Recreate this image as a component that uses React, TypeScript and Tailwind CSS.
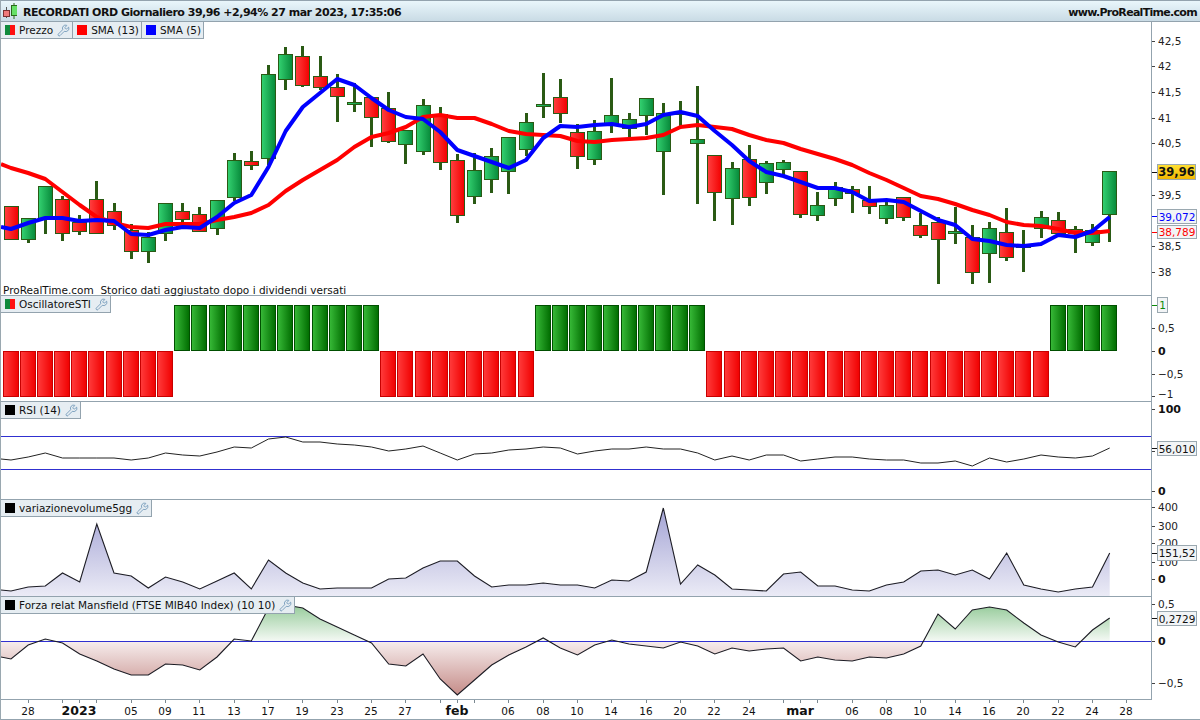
import React from "react";
import { Wrench } from "lucide-react";

const X = (i: number) => 11 + 17.1667 * i;
const cx = (i: number) => Math.floor(X(i)) + 0.5;

// [high, low, top, bottom, green?]
const C: [number, number, number, number, number][] = [
  [206,239,206,239,0],[218,243,218,239,1],[186,234,186,218,1],[196,241,199,233,0],[215,235,222,231,0],
  [181,233,199,233,0],[203,230,211,225,0],[224,259,230,251,0],[232,263,237,251,1],[203,241,203,233,1],
  [203,223,211,219,0],[207,231,214,231,0],[200,235,200,228,1],[153,201,160,197,1],[151,170,161,165,0],
  [65,165,74,158,1],[47,90,54,79,1],[46,87,56,85,0],[56,90,76,87,0],[74,122,87,96,0],
  [83,112,102,104,1],[97,147,97,117,0],[92,143,108,141,0],[130,164,130,144,1],[99,155,105,151,1],
  [107,170,114,162,0],[154,223,160,215,0],[153,204,170,196,1],[148,193,156,179,1],[137,194,137,171,1],
  [113,156,122,149,1],[73,118,104,106,1],[79,123,97,113,0],[124,169,132,156,0],[120,165,131,159,1],
  [78,133,115,125,1],[113,137,119,128,1],[98,135,98,115,1],[103,195,113,151,1],[101,126,112,114,1],
  [86,204,139,143,1],[155,221,155,192,0],[162,225,168,198,1],[145,206,159,197,0],[161,194,163,182,1],
  [160,176,162,169,1],[171,218,171,214,0],[192,221,205,215,1],[182,206,187,198,1],[186,213,189,193,0],
  [186,214,200,206,0],[202,224,205,218,1],[197,221,197,217,0],[213,238,225,235,0],[217,284,222,239,0],
  [207,244,231,233,1],[225,284,237,272,0],[222,283,228,253,1],[208,261,232,257,0],[230,272,245,247,1],
  [211,238,217,228,1],[212,236,220,233,0],[226,253,229,233,0],[224,246,230,242,1],[171,242,171,214,1],
];

const SMA13 = [168,173,179,192,205,217,223,227,228,224,224,224,220,217,213,205,191,180,170,160,147,137,133,127,117,115,118,118,124,131,134,135,136,141,142,140,139,138,135,127,125,127,129,135,140,143,149,154,159,165,173,180,188,196,199,204,210,215,222,225,226,229,233,233,231];
const SMA5 = [229,223,218,218,221,220,221,234,235,230,227,228,217,203,195,167,131,107,93,79,85,98,110,117,119,132,150,156,162,168,160,138,126,127,125,124,127,124,115,112,116,131,145,161,172,176,182,188,188,192,201,200,202,211,220,225,239,241,245,246,244,235,237,231,217];
const RSI = [460,457,453,458,458,458,458,460,458,453,455,456,452,447,448,439,437,442,442,444,445,447,451,449,446,453,460,454,453,450,449,447,448,454,451,449,449,447,449,449,453,460,456,460,455,455,461,459,457,457,459,460,460,463,463,461,466,458,462,459,455,457,458,456,448];
const VOL = [591,587,586,573,582,524,573,576,588,577,582,589,581,573,589,560,573,583,589,588,588,588,579,578,568,561,561,576,587,585,585,583,585,585,588,580,581,572,508,584,565,575,589,590,591,574,572,586,586,590,591,585,582,571,570,575,570,579,553,585,589,592,589,587,553];
const MANS = [659,645,639,643,654,661,669,675,675,664,665,670,657,639,641,608,605,608,619,627,635,643,664,666,654,679,695,680,665,655,647,638,648,655,645,640,644,646,648,642,646,654,648,651,649,648,661,657,660,661,657,658,654,646,614,629,610,607,610,623,635,642,647,630,618];

const line = (ys: number[], x0: number, y0: number) =>
  `${x0},${y0} ` + ys.map((y, i) => `${X(i).toFixed(1)},${y}`).join(" ");

const OSC = Array.from({ length: 65 }, (_, i) =>
  (i >= 10 && i <= 21) || (i >= 31 && i <= 40) || i >= 61 ? 1 : 0
);

type Tick = { y: number; t?: string; b?: boolean; ty?: number };
type Box = { y: number; h: number; w: number; t: string; c: string; bold?: boolean; gold?: boolean };

function Axis({ top, className, ticks, boxes }: { top: number; className: string; ticks: Tick[]; boxes?: Box[] }) {
  const h = parseInt(className.match(/h-\[(\d+)px\]/)?.[1] ?? "100");
  return (
    <svg viewBox={`1152 ${top} 48 ${h}`} className={className}>
      <defs>
        <linearGradient id={`gold${top}`} x1="0" y1="0" x2="0" y2="1">
          <stop offset="0" stopColor="#ffe033" />
          <stop offset="1" stopColor="#f2b600" />
        </linearGradient>
      </defs>
      {ticks.map((k) => (
        <g key={k.y}>
          <line x1="1152" x2="1155" y1={k.y + 0.5} y2={k.y + 0.5} stroke="#444" />
          {k.t && (
            <text
              x="1158"
              y={(k.ty ?? k.y) + 4}
              className={k.b ? "text-[11px] font-bold" : "text-[10.5px]"}
              fill={k.b ? "#111" : "#222"}
            >
              {k.t}
            </text>
          )}
        </g>
      ))}
      {boxes?.map((b) => (
        <g key={b.t}>
          <line x1="1152" x2="1157" y1={Math.round(b.y + b.h / 2) + 0.5} y2={Math.round(b.y + b.h / 2) + 0.5} stroke={b.gold ? "#111" : b.c} />
          <rect
            x="1157.5"
            y={b.y + 0.5}
            width={b.w}
            height={b.h}
            fill={b.gold ? `url(#gold${top})` : "#f2f4f6"}
            stroke="#9aa8b0"
          />
          <text
            x={1157.5 + b.w / 2}
            y={b.y + b.h / 2 + 4.5}
            textAnchor="middle"
            className={b.bold ? "text-[11.5px] font-bold" : "text-[10.5px]"}
            fill={b.c}
          >
            {b.t}
          </text>
        </g>
      ))}
    </svg>
  );
}

function Chip({ name, swatch, wrench = true }: { name: string; swatch: React.ReactNode; wrench?: boolean }) {
  return (
    <div
      className={
        wrench
          ? "flex items-center h-[17px] pl-1 pr-[2px] gap-1 bg-[#e6edf2] border-r border-b border-[#93a3ae] text-[10.5px] leading-none text-[#111] whitespace-nowrap"
          : "flex items-center h-[17px] pl-1 pr-[2px] gap-1 bg-[#e6edf2] border-r border-b border-[#93a3ae] text-[10.5px] leading-none text-[#111] whitespace-nowrap"
      }
    >
      {swatch}
      <span>{name}</span>
      {wrench && <Wrench size={13} strokeWidth={1.25} className="text-[#4f7fa8]" />}
    </div>
  );
}

const Black = <span className="block w-2.5 h-2.5 bg-black" />;
const Red = <span className="block w-2.5 h-2.5 bg-[#ff0000]" />;
const Blue = <span className="block w-2.5 h-2.5 bg-[#0000ff]" />;
const Mixed = (
  <span className="flex w-2.5 h-2.5">
    <span className="w-[5px] bg-[#0f8a3c]" />
    <span className="w-[5px] bg-[#ff1010]" />
  </span>
);

const bottomLabels: [number, string, boolean?][] = [
  [1, "28"],[4, "2023", true],[7, "05"],[9, "09"],[11, "11"],[13, "13"],[15, "17"],[17, "19"],[19, "23"],[21, "25"],
  [23, "27"],[26, "feb", true],[29, "06"],[31, "08"],[33, "10"],[35, "14"],[37, "16"],[39, "20"],[41, "22"],[43, "24"],
  [46, "mar", true],[49, "06"],[51, "08"],[53, "10"],[55, "14"],[57, "16"],[59, "20"],[61, "22"],[63, "24"],[65, "28"],
];
const minorTicks = [3, 5, 25, 27, 45, 47];

export default function App() {
  return (
    <div className="w-[1200px] h-[720px] flex flex-col bg-white overflow-hidden border-l border-[#9aa8b0] font-['DejaVu_Sans',sans-serif] text-[#111]">
      {/* Title bar */}
      <div className="h-[22px] shrink-0 flex items-center justify-between border-y border-[#93a3ae] bg-gradient-to-b from-[#e9f6fb] to-[#c9dbe5] pr-[3px] text-[11px] font-bold whitespace-nowrap">
        <div className="flex items-center gap-[6px]">
          <svg width="16" height="18" viewBox="0 0 16 18">
            <line x1="5.5" x2="5.5" y1="5" y2="16" stroke="#555" />
            <rect x="2.5" y="8.5" width="6" height="6" fill="#ef7a7a" stroke="#7a3030" />
            <line x1="13" x2="13" y1="1" y2="17" stroke="#2a6a1a" />
            <rect x="10.5" y="3.5" width="6" height="10" fill="#66e066" stroke="#2a6a1a" />
          </svg>
          <span className="mt-[4px] tracking-[-0.5px]">RECORDATI ORD Giornaliero 39,96 +2,94% 27 mar 2023, 17:35:06</span>
        </div>
        <span className="mt-[4px] tracking-[-0.7px]">www.ProRealTime.com</span>
      </div>

      {/* Price */}
      <div className="flex h-[274px] shrink-0">
        <div className="relative w-[1150px] border-b border-[#93a3ae]">
          <svg viewBox="1 22 1150 273" className="block w-[1150px] h-[273px]">
            <defs>
              <linearGradient id="gG" x1="0" y1="0" x2="1" y2="0">
                <stop offset="0" stopColor="#34d271" />
                <stop offset="1" stopColor="#07893a" />
              </linearGradient>
              <linearGradient id="gR" x1="0" y1="0" x2="1" y2="0">
                <stop offset="0" stopColor="#ff4040" />
                <stop offset="1" stopColor="#f20000" />
              </linearGradient>
            </defs>
            {C.map(([hi, lo, t, b, g], i) => {
              const x = cx(i);
              return (
                <g key={i}>
                  <line x1={x} x2={x} y1={hi} y2={lo} stroke="#2a5a14" strokeWidth="3" />
                  <rect
                    x={x - 7}
                    y={t + 0.5}
                    width="14"
                    height={Math.max(b - t, 1)}
                    fill={g ? "url(#gG)" : "url(#gR)"}
                    stroke="#2a5a14"
                  />
                </g>
              );
            })}
            <polyline points={line(SMA13, 1, 164)} fill="none" stroke="#ff0000" strokeWidth="4" strokeLinejoin="round" />
            <polyline points={line(SMA5, 1, 227)} fill="none" stroke="#0000ff" strokeWidth="4" strokeLinejoin="round" />
          </svg>
          <div className="absolute left-0 top-0 flex">
            <Chip name="Prezzo" swatch={Mixed} />
            <Chip name="SMA (13)" swatch={Red} wrench={false} />
            <Chip name="SMA (5)" swatch={Blue} wrench={false} />
          </div>
          <div className="absolute left-[2px] bottom-[-2px] text-[10.5px] leading-[14px] whitespace-pre">
            ProRealTime.com  Storico dati aggiustato dopo i dividendi versati
          </div>
        </div>
        <div className="w-[49px] border-l border-[#93a3ae]">
          <Axis
            top={22}
            className="block w-[48px] h-[274px]"
            ticks={[
              { y: 41, t: "42,5" },{ y: 66, t: "42" },{ y: 92, t: "41,5" },{ y: 118, t: "41" },
              { y: 143, t: "40,5" },{ y: 195, t: "39,5" },{ y: 246, t: "38,5" },{ y: 272, t: "38" },
            ]}
            boxes={[
              { y: 164, h: 15, w: 38, t: "39,96", c: "#111", bold: true, gold: true },
              { y: 209, h: 14, w: 39, t: "39,072", c: "#0000ff" },
              { y: 225, h: 13, w: 39, t: "38,789", c: "#ff0000" },
            ]}
          />
        </div>
      </div>

      {/* Oscillator */}
      <div className="flex h-[106px] shrink-0">
        <div className="relative w-[1150px] border-b border-[#93a3ae]">
          <svg viewBox="1 296 1150 105" className="block w-[1150px] h-[105px]">
            <defs>
              <linearGradient id="oG" x1="0" y1="0" x2="1" y2="0">
                <stop offset="0" stopColor="#38ba38" />
                <stop offset="1" stopColor="#006c00" />
              </linearGradient>
              <linearGradient id="oR" x1="0" y1="0" x2="1" y2="0">
                <stop offset="0" stopColor="#ff3c3c" />
                <stop offset="1" stopColor="#f00000" />
              </linearGradient>
            </defs>
            {OSC.map((g, i) => (
              <rect
                key={i}
                x={cx(i) - 8}
                y={g ? 305.5 : 351.5}
                width="15"
                height="45"
                fill={g ? "url(#oG)" : "url(#oR)"}
                stroke={g ? "#004f00" : "#c80000"}
              />
            ))}
          </svg>
          <div className="absolute left-0 top-0 flex">
            <Chip name="OscillatoreSTI" swatch={Mixed} />
          </div>
        </div>
        <div className="w-[49px] border-l border-[#93a3ae]">
          <Axis
            top={296}
            className="block w-[48px] h-[106px]"
            ticks={[
              { y: 328, t: "0,5" },{ y: 351, t: "0", b: true },{ y: 374, t: "−0,5" },{ y: 396, t: "−1", ty: 394 },
            ]}
            boxes={[{ y: 297, h: 15, w: 10, t: "1", c: "#0a8a0a" }]}
          />
        </div>
      </div>

      {/* RSI */}
      <div className="flex h-[98px] shrink-0">
        <div className="relative w-[1150px] border-b border-[#93a3ae]">
          <svg viewBox="1 402 1150 97" className="block w-[1150px] h-[97px]">
            <line x1="1" x2="1151" y1="436.5" y2="436.5" stroke="#3030d0" />
            <line x1="1" x2="1151" y1="469.5" y2="469.5" stroke="#3030d0" />
            <polyline points={line(RSI, 1, 459)} fill="none" stroke="#222" strokeWidth="1" />
          </svg>
          <div className="absolute left-0 top-0 flex">
            <Chip name="RSI (14)" swatch={Black} />
          </div>
        </div>
        <div className="w-[49px] border-l border-[#93a3ae]">
          <Axis
            top={402}
            className="block w-[48px] h-[98px]"
            ticks={[{ y: 409, t: "100", b: true },{ y: 491, t: "0", b: true },{ y: 451, t: "50" }]}
            boxes={[{ y: 441, h: 14, w: 39, t: "56,010", c: "#111" }]}
          />
        </div>
      </div>

      {/* Volume */}
      <div className="flex h-[97px] shrink-0">
        <div className="relative w-[1150px] border-b border-[#93a3ae]">
          <svg viewBox="1 500 1150 96" className="block w-[1150px] h-[96px]">
            <defs>
              <linearGradient id="vF" gradientUnits="userSpaceOnUse" x1="0" y1="508" x2="0" y2="596">
                <stop offset="0" stopColor="#a3a3d4" />
                <stop offset="1" stopColor="#ebebf6" />
              </linearGradient>
            </defs>
            <polygon points={`1,596 ${line(VOL, 1, 590)} ${X(64).toFixed(1)},596`} fill="url(#vF)" />
            <polyline points={line(VOL, 1, 590)} fill="none" stroke="#1c1c24" strokeWidth="1.1" />
          </svg>
          <div className="absolute left-0 top-0 flex">
            <Chip name="variazionevolume5gg" swatch={Black} />
          </div>
        </div>
        <div className="w-[49px] border-l border-[#93a3ae]">
          <Axis
            top={500}
            className="block w-[48px] h-[97px]"
            ticks={[
              { y: 507, t: "400" },{ y: 526, t: "300" },{ y: 543, t: "200" },{ y: 562, t: "100" },{ y: 579, t: "0", b: true },
            ]}
            boxes={[{ y: 545, h: 15, w: 39, t: "151,52", c: "#111" }]}
          />
        </div>
      </div>

      {/* Mansfield */}
      <div className="flex h-[103px] shrink-0">
        <div className="relative w-[1150px] border-b border-[#93a3ae]">
          <svg viewBox="1 597 1150 102" className="block w-[1150px] h-[102px]">
            <defs>
              <linearGradient id="mG" gradientUnits="userSpaceOnUse" x1="0" y1="606" x2="0" y2="641">
                <stop offset="0" stopColor="#98cc9c" />
                <stop offset="1" stopColor="#f4f9f4" />
              </linearGradient>
              <linearGradient id="mR" gradientUnits="userSpaceOnUse" x1="0" y1="641" x2="0" y2="696">
                <stop offset="0" stopColor="#f7eeee" />
                <stop offset="1" stopColor="#c48a86" />
              </linearGradient>
              <clipPath id="cU"><rect x="0" y="597" width="1151" height="44" /></clipPath>
              <clipPath id="cD"><rect x="0" y="641" width="1151" height="58" /></clipPath>
            </defs>
            <polygon points={`1,641 ${line(MANS, 1, 657)} ${X(64).toFixed(1)},641`} fill="url(#mG)" clipPath="url(#cU)" />
            <polygon points={`1,641 ${line(MANS, 1, 657)} ${X(64).toFixed(1)},641`} fill="url(#mR)" clipPath="url(#cD)" />
            <line x1="1" x2="1151" y1="641.5" y2="641.5" stroke="#3030d0" />
            <polyline points={line(MANS, 1, 657)} fill="none" stroke="#1c1c24" strokeWidth="1.1" />
          </svg>
          <div className="absolute left-0 top-0 flex">
            <Chip name="Forza relat Mansfield (FTSE MIB40 Index) (10 10)" swatch={Black} />
          </div>
        </div>
        <div className="w-[49px] border-l border-[#93a3ae]">
          <Axis
            top={597}
            className="block w-[48px] h-[103px]"
            ticks={[{ y: 604, t: "0,5" },{ y: 641, t: "0", b: true },{ y: 683, t: "−0,5" }]}
            boxes={[{ y: 611, h: 14, w: 39, t: "0,2729", c: "#111" }]}
          />
        </div>
      </div>

      {/* Date axis */}
      <div className="h-[20px] shrink-0 border-b border-[#93a3ae]">
        <svg viewBox="1 700 1199 19" className="block w-[1199px] h-[19px]">
          {[...bottomLabels.map((l) => l[0]), ...minorTicks].map((i) => (
            <line key={i} x1={cx(i)} x2={cx(i)} y1="700" y2="703" stroke="#7a8890" />
          ))}
          {bottomLabels.map(([i, t, b]) => (
            <text
              key={t + i}
              x={cx(i) - 0.5}
              y="714.5"
              textAnchor="middle"
              className={b ? "text-[12.5px] font-bold" : "text-[10.5px]"}
              fill="#111"
            >
              {t}
            </text>
          ))}
        </svg>
      </div>
    </div>
  );
}
